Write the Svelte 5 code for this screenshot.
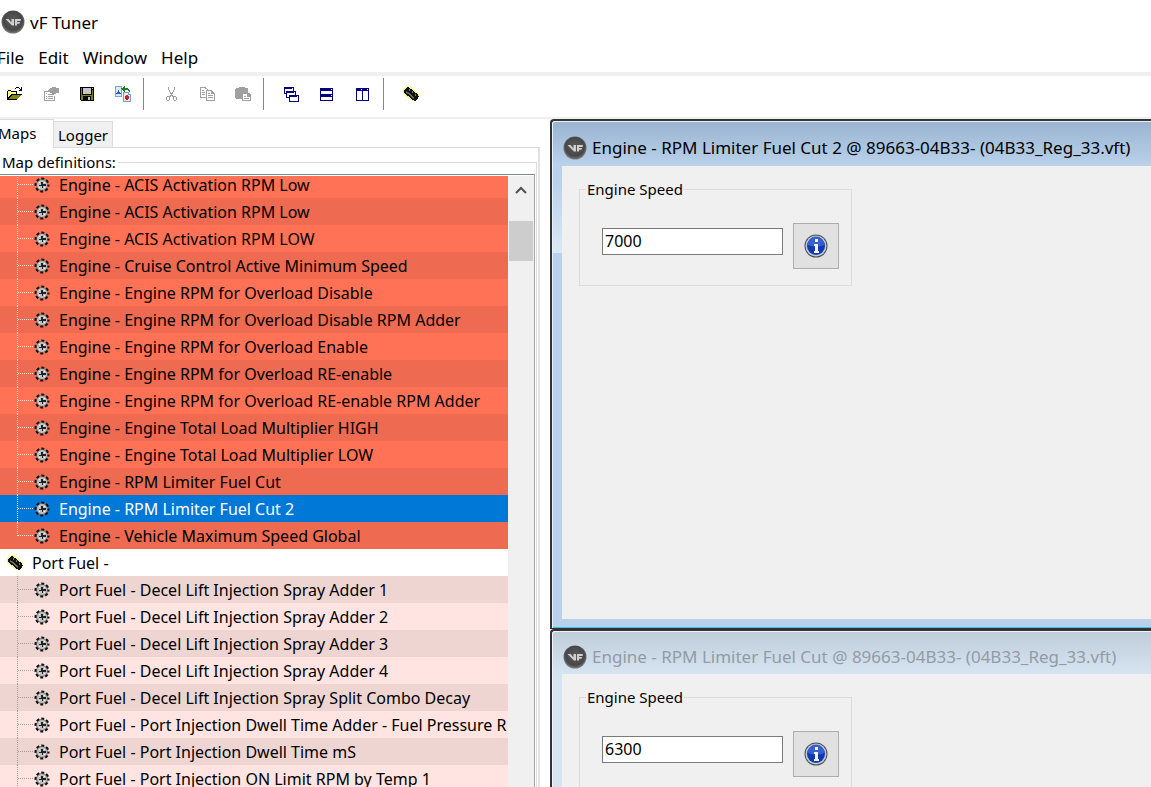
<script>
    let activeTab = $state('Maps');
    let selected = $state('Engine - RPM Limiter Fuel Cut 2');

    const menus = ['File', 'Edit', 'Window', 'Help'];
    const tabs = ['Maps', 'Logger'];

    const toolbar = [
        ['open', 'properties', 'save', 'convert'],
        ['cut', 'copy', 'paste'],
        ['cascade', 'horizontal', 'vertical'],
        ['chip']
    ];
    const disabled = ['properties', 'cut', 'copy', 'paste'];

    const engineMaps = [
        'ACIS Activation RPM Low',
        'ACIS Activation RPM Low',
        'ACIS Activation RPM LOW',
        'Cruise Control Active Minimum Speed',
        'Engine RPM for Overload Disable',
        'Engine RPM for Overload Disable RPM Adder',
        'Engine RPM for Overload Enable',
        'Engine RPM for Overload RE-enable',
        'Engine RPM for Overload RE-enable RPM Adder',
        'Engine Total Load Multiplier HIGH',
        'Engine Total Load Multiplier LOW',
        'RPM Limiter Fuel Cut',
        'RPM Limiter Fuel Cut 2',
        'Vehicle Maximum Speed Global'
    ].map((name) => 'Engine - ' + name);

    const portMaps = [
        'Decel Lift Injection Spray Adder 1',
        'Decel Lift Injection Spray Adder 2',
        'Decel Lift Injection Spray Adder 3',
        'Decel Lift Injection Spray Adder 4',
        'Decel Lift Injection Spray Split Combo Decay',
        'Port Injection Dwell Time Adder - Fuel Pressure R',
        'Port Injection Dwell Time mS',
        'Port Injection ON Limit RPM by Temp 1'
    ].map((name) => 'Port Fuel - ' + name);

    let windows = $state([
        { id: 'cut2', title: 'Engine - RPM Limiter Fuel Cut 2 @ 89663-04B33- (04B33_Reg_33.vft)', value: '7000', active: true },
        { id: 'cut1', title: 'Engine - RPM Limiter Fuel Cut @ 89663-04B33- (04B33_Reg_33.vft)', value: '6300', active: false }
    ]);
</script>

{#snippet logo()}
    <svg class="logo" viewBox="0 0 24 24" aria-hidden="true">
        <defs>
            <radialGradient id="ball" cx="50%" cy="45%" r="55%">
                <stop offset="0" stop-color="#5c5c5c" />
                <stop offset="0.75" stop-color="#474747" />
                <stop offset="1" stop-color="#808080" />
            </radialGradient>
        </defs>
        <circle cx="12" cy="12" r="11.5" fill="url(#ball)" />
        <path d="M4.500 9h3l3 3.500V9h2.500v6.500h-2zM14 9h6l-.5 2H16v1h3l-.5 1.800H16v1.700h-2z" fill="#cfcfcf" />
    </svg>
{/snippet}

{#snippet chip()}
    <svg class="icon" viewBox="0 0 16 16" aria-hidden="true">
        <path d="M0 3l4-3h3l9 8v3l-4 4h-3L0 8z" fill="#f6f08a" />
        <path d="M1 4h1V3h1V2h1V1h2v1h1v1h2v1h1v1h1v1h1v1h2v1h1v2h1v1h-1v2h-1v1h-1v1h-2v-1H9v-1H8v-1H7v-1H6v-1H4V9H3V8H2V7H1z" fill="#111" shape-rendering="crispEdges" />
        <path d="M3 6h1v1h2v1h1v1h1v1h1v1h1v1h1" fill="none" stroke="#8b8b8b" />
        <path d="M6 4h1M9 6h1M12 9h1" stroke="#ddd" />
    </svg>
{/snippet}

{#snippet gear()}
    <svg class="icon" viewBox="0 0 16 16" aria-hidden="true">
        <circle cx="8" cy="8" r="5.5" fill="#c0c0c0" stroke="#777" />
        <circle cx="8" cy="8" r="6.500" fill="none" stroke="#101010" stroke-width="2" stroke-dasharray="3 2.105" stroke-dashoffset="1.500" />
        <path d="M7 5h2v2h3v2H9v2H8V9H5V8h2z" fill="#222" shape-rendering="crispEdges" />
        <path d="M5 5h1v1H5zM10 5h1v1h-1zM5 10h1v1H5zM10 10h1v1h-1z" fill="#f5f5f5" shape-rendering="crispEdges" />
    </svg>
{/snippet}

{#snippet toolIcon(name)}
    {#if name === 'chip'}
        {@render chip()}
    {:else}
        <svg class="icon" viewBox="0 0 16 16" shape-rendering="crispEdges" aria-hidden="true">
            {#if name === 'open'}
                <path d="M0 5h1V4h3v1h6v3h5v1h-1v1h-1v1h-1v1h-1v1h-1v1H0z" fill="#000" />
                <path d="M1 5h3v1h5v2H4v1H3v1H2v1H1z" fill="#ffff8c" />
                <path d="M5 9h9v1h-1v1h-1v1h-1v1H2v-1h1v-1h1v-1h1z" fill="#848415" />
                <path d="M9 1h3v1h1v1h1V1h1v4h-3V4h1V3h-1V2H9v1H8V2h1z" fill="#000" />
            {:else if name === 'properties'}
                <path d="M1 5h4v1H2v8h9v-4h1v5H1zM3 7h1v1H3zM5 8h5v1H5zM3 10h1v1H3zM5 10h5v1H5zM3 12h1v1H3zM5 12h5v1H5zM6 3h1V2h2V1h4v1h3v5h-3v1h-2v1H9V7H7V6H5V4h1z" fill="#a0a0a0" />
            {:else if name === 'save'}
                <path d="M1 1h14v14H2v-1H1z" fill="#000" />
                <path d="M2 2h1v7h10V4h1v10h-2v-4H4v4H2z" fill="#808000" />
                <path d="M4 2h8v6H4zM13 2h1v1h-1zM9 11h2v3H9z" fill="#c6c6c6" />
            {:else if name === 'convert'}
                <path d="M0 0h7v11H0z" fill="#78a6dc" />
                <path d="M1 1h5v9H1z" fill="#dceafb" />
                <path d="M1 7h1V6h1V4h1v2h1v1h1v1H1z" fill="#1760c8" />
                <path d="M8 6h6v2h2v8H8z" fill="#7d9ccc" />
                <path d="M9 7h4v2h2v6H9z" fill="#e8effa" />
                <path d="M10 10h1V9h2v1h1v3h-1v1h-2v-1h-1z" fill="#d51d24" />
                <path d="M6 2h2V1h1V0h1v2h3v1h1v1h1v2h-1V5h-1V4h-3v2H9V5H8V4H7V3H6z" fill="#168516" />
            {:else if name === 'cut'}
                <path d="M5 1h1v3h1v2h1v1h1V6h1V4h1V1h1v3h-1v2h-1v2H9v1h1v1h3v1h1v3h-1v1h-2v-1h-1v-3H9v-1H8v1H7v3H6v1H4v-1H3v-3h1v-1h3V9h1V8H7V6H6V4H5zM4 11v3h2v-3zM11 11v3h2v-3z" fill="#a0a0a0" fill-rule="evenodd" />
            {:else if name === 'copy'}
                <path d="M1 1h6v1h1v1h1v1h4v1h1v1h1v1h1v8H7v-3H1zM2 2v9h5V4h1V3H6V2zM8 5v9h7V8h-3V5zM3 4h2v1H3zM3 6h3v1H3zM3 8h3v1H3zM9 7h2v1H9zM9 9h5v1H9zM9 11h5v1H9z" fill="#a0a0a0" fill-rule="evenodd" />
            {:else if name === 'paste'}
                <path d="M1 2h3V1h6v1h3v5h2v1h1v7H7v-2H1v-1H0V3h1z" fill="#a0a0a0" />
                <path d="M8 8h4v3h3v3H8z" fill="#fff" />
                <path d="M9 10h2v1H9zM9 12h5v1H9z" fill="#a0a0a0" />
            {:else if name === 'cascade'}
                {#each [[1, 1], [3, 5], [6, 9]] as [x, y]}
                    <rect {x} {y} width="10" height="7" fill="#000080" />
                    <rect x={x + 1} y={y + 2} width="8" height="4" fill="#fff" />
                    <rect x={x + 8} y={y + 1} width="1" height="1" fill="#fff" />
                {/each}
            {:else if name === 'horizontal'}
                <path d="M1 2h13v13H1z" fill="#000080" />
                <path d="M2 5h11v3H2zM2 11h11v3H2zM12 3h1v1h-1zM12 9h1v1h-1z" fill="#fff" />
            {:else if name === 'vertical'}
                <path d="M1 2h13v13H1z" fill="#000080" />
                <path d="M2 5h5v9H2zM8 5h5v9H8zM6 3h1v1H6zM12 3h1v1h-1z" fill="#fff" />
            {/if}
        </svg>
    {/if}
{/snippet}

{#snippet branch(maps, kind)}
    <ul class="branch {kind}">
        {#each maps as name}
            <li>
                <button class="row" class:selected={name === selected} onclick={() => (selected = name)}>
                    <span class="twig"></span>
                    {@render gear()}
                    <span class="name">{name}</span>
                </button>
            </li>
        {/each}
    </ul>
{/snippet}

<div class="app">
    <header class="titlebar">
        {@render logo()}
        <span>vF Tuner</span>
    </header>

    <nav class="menubar">
        {#each menus as menu}
            <button>{menu}</button>
        {/each}
    </nav>

    <div class="toolbar" role="toolbar" aria-label="Main">
        {#each toolbar as group}
            <div class="group">
                {#each group as name}
                    <button aria-label={name} disabled={disabled.includes(name)}>
                        {@render toolIcon(name)}
                    </button>
                {/each}
            </div>
        {/each}
    </div>

    <div class="workspace">
        <aside>
            <div class="tabs" role="tablist">
                {#each tabs as tab}
                    <button role="tab" aria-selected={tab === activeTab} class:active={tab === activeTab} onclick={() => (activeTab = tab)}>{tab}</button>
                {/each}
            </div>
            <div class="tab-page">
                <fieldset class="definitions">
                    <legend>Map definitions:</legend>
                    <div class="tree">
                        <div class="tree-view">
                            <div class="tree-scroll">
                                {@render branch(engineMaps, 'engine')}
                                <button class="row folder">
                                    {@render chip()}
                                    <span class="name">Port Fuel -</span>
                                </button>
                                {@render branch(portMaps, 'port')}
                            </div>
                        </div>
                        <div class="scrollbar">
                            <button aria-label="Scroll up">
                                <svg viewBox="0 0 12 8" width="12" height="8"><path d="M1 7l5-5 5 5" fill="none" stroke="#505050" stroke-width="2" /></svg>
                            </button>
                            <div class="thumb"></div>
                        </div>
                    </div>
                </fieldset>
            </div>
        </aside>

        <main>
            {#each windows as win (win.id)}
                <section class="window" class:inactive={!win.active}>
                    <h2>
                        {@render logo()}
                        <span>{win.title}</span>
                    </h2>
                    <div class="client">
                        <fieldset class="speed">
                            <legend><label for={win.id}>Engine Speed</label></legend>
                            <input id={win.id} type="text" bind:value={win.value} />
                            <button aria-label="Info">
                                <svg viewBox="0 0 24 24" width="24" height="24">
                                    <circle cx="12" cy="12" r="11.500" fill="#4c5058" />
                                    <circle cx="12" cy="12" r="10.500" fill="#c3ccd6" />
                                    <circle cx="12" cy="12" r="9" fill="#1238b4" />
                                    <path d="M3.500 11a8.500 8.500 0 0 1 17 0q-8 3-17 0z" fill="#3560cf" />
                                    <path d="M11 5h3v3h-3zM10 10h4v7h1v2h-5v-2h1v-5h-1z" fill="#f2f5fa" />
                                </svg>
                            </button>
                        </fieldset>
                    </div>
                </section>
            {/each}
        </main>
    </div>
</div>

<style>
    :global(body) {
        margin: 0;
        background: #fff;
    }

    .app {
        display: flex;
        flex-direction: column;
        height: 100vh;
        overflow: hidden;
        color: #000;
        font-family: "Noto Sans", "Open Sans", sans-serif;
        font-size: 16px;
    }

    button {
        padding: 0;
        border: 0;
        background: none;
        color: inherit;
        font: inherit;
    }

    .logo {
        flex: none;
        width: 24px;
        height: 24px;
    }

    .icon {
        flex: none;
        display: block;
        width: 16px;
        height: 16px;
    }

    .titlebar {
        display: flex;
        flex: none;
        align-items: center;
        gap: 5px;
        height: 44px;
        padding-left: 1px;
        font-size: 17px;
    }

    .menubar {
        display: flex;
        flex: none;
        gap: 14px;
        height: 28px;
        margin-left: -3px;
        font-size: 17px;
        line-height: 28px;
    }

    .toolbar {
        display: flex;
        flex: none;
        align-items: center;
        height: 36px;
        padding: 0 0 5px;
        border-top: 4px solid #f0f0f0;
        border-bottom: 2px solid #f0f0f0;
    }

    .group {
        display: flex;
        align-items: center;
        height: 32px;
    }

    .group:first-child {
        margin-left: -3px;
    }

    .group + .group {
        margin-left: 2px;
        padding-left: 9px;
        border-left: 1px solid #868686;
    }

    .group button {
        display: flex;
        align-items: center;
        justify-content: center;
        width: 36px;
        height: 32px;
    }

    .workspace {
        display: flex;
        flex: 1;
        min-height: 0;
    }

    /* left panel */
    aside {
        display: flex;
        flex: 0 0 550px;
        flex-direction: column;
        min-width: 0;
    }

    .tabs {
        display: flex;
        flex: none;
        align-items: flex-end;
        height: 29px;
        margin-right: 10px;
        box-shadow: inset 0 -1px #dcdcdc;
        font-size: 15px;
    }

    .tabs button {
        box-sizing: border-box;
        height: 27px;
        padding: 0 4px;
        border: 1px solid #dcdcdc;
        border-left: 0;
        background: #f0f0f0;
        line-height: 26px;
    }

    .tabs .active {
        width: 54px;
        height: 29px;
        padding: 0 0 2px;
        border-bottom: 0;
        background: #fff;
        text-align: left;
        text-indent: -2px;
    }

    .tab-page {
        display: flex;
        flex: 1;
        min-height: 0;
        margin-right: 10px;
        padding-right: 1px;
        border-right: 2px solid #e2e2e2;
    }

    fieldset {
        min-width: 0;
        margin: 0;
        padding: 0;
        border: 1px solid #dcdcdc;
    }

    .definitions {
        flex: 1;
        width: 100%;
        min-height: 0;
        margin-top: 2px;
        padding-right: 1px;
        border-left: 0;
        border-bottom: 0;
    }

    legend {
        font-size: 15px;
    }

    .definitions legend {
        padding: 0 2px;
        line-height: 24px;
    }

    .tree {
        display: flex;
        height: calc(100vh - 174px);
        box-sizing: border-box;
        padding-top: 1px;
        border-top: 1px solid #828790;
        border-right: 1px solid #a0a3a8;
    }

    .tree-view {
        flex: 1;
        min-width: 0;
        overflow: hidden;
    }

    .tree-scroll {
        margin-top: -5px;
    }

    .branch {
        margin: 0;
        padding: 0;
        list-style: none;
    }

    .row {
        display: flex;
        align-items: center;
        gap: 9px;
        width: 100%;
        height: 27px;
        padding-left: 17px;
        text-align: left;
        white-space: nowrap;
    }

    .folder {
        padding-left: 7px;
    }

    .twig {
        flex: none;
        align-self: flex-start;
        box-sizing: border-box;
        width: 17px;
        height: 27px;
        margin-right: -9px;
        border-left: 1px dotted #a89c9a;
        background: linear-gradient(90deg, #a89c9a 50%, transparent 50%) 0 13px / 2px 1px repeat-x;
    }

    .engine .twig {
        border-color: #ffe4dc;
        background-image: linear-gradient(90deg, #ffe4dc 50%, transparent 50%);
    }

    .engine li:last-child .twig {
        height: 14px;
    }

    .engine .row {
        background: #ff7256;
    }

    .engine li:nth-child(even) .row {
        background: #ee6a50;
    }

    .port .row {
        background: #eed5d2;
    }

    .port li:nth-child(even) .row {
        background: #ffe4e1;
    }

    .engine li .row.selected {
        background: #0078d7;
        color: #fff;
    }

    .scrollbar {
        flex: none;
        width: 26px;
        padding: 0 1px;
        box-sizing: border-box;
        background: #f0f0f0;
    }

    .scrollbar button {
        display: flex;
        align-items: center;
        justify-content: center;
        width: 100%;
        height: 28px;
    }

    .thumb {
        height: 40px;
        margin-top: 17px;
        background: #cdcdcd;
    }

    /* child windows */
    main {
        display: flex;
        flex: 1;
        flex-direction: column;
        min-width: 0;
    }

    .window {
        flex: none;
        box-sizing: border-box;
        padding: 2px 0 9px 10px;
        border: solid #333;
        border-width: 2px 0 1px 2px;
        border-top-left-radius: 4px;
        background:
            linear-gradient(#99b4d1, #b9d1ea 44px, transparent 44px),
            linear-gradient(#b9d1ea, #b9d1ea 60px, #dce8f5 132px, #b9d1ea 132px);
        box-shadow: inset 1px 1px #e8f2fb, inset 0 -1px #38c6e8;
    }

    .inactive {
        background: linear-gradient(#bfcddb, #d7e4f2 44px);
        box-shadow: inset 1px 1px #f0f5fa;
    }

    h2 {
        display: flex;
        align-items: center;
        gap: 5px;
        height: 43px;
        margin: 0;
        padding: 6px 0 0 1px;
        overflow: hidden;
        box-sizing: border-box;
        font-size: 17px;
        font-weight: 400;
        white-space: nowrap;
    }

    .inactive h2 {
        height: 41px;
        color: #939ba4;
    }

    .client {
        height: 453px;
        padding: 10px 0 0 17px;
        box-sizing: border-box;
        background: #f0f0f0;
    }

    .speed {
        display: flex;
        align-items: center;
        gap: 10px;
        box-sizing: border-box;
        width: 273px;
        height: 110px;
        padding: 4px 12px 0 22px;
    }

    .speed legend {
        margin-left: -16px;
        padding: 0 1px;
        line-height: 26px;
    }

    .speed input {
        flex: 1;
        box-sizing: border-box;
        min-width: 0;
        height: 27px;
        margin-bottom: 9px;
        padding: 0 2px;
        border: 1px solid #7a7a7a;
        border-radius: 0;
        background: #fff;
        color: #000;
        font: inherit;
    }

    .speed button {
        display: flex;
        align-items: center;
        justify-content: center;
        box-sizing: border-box;
        width: 46px;
        height: 46px;
        border: 1px solid #adadad;
        background: #e1e1e1;
    }
</style>
